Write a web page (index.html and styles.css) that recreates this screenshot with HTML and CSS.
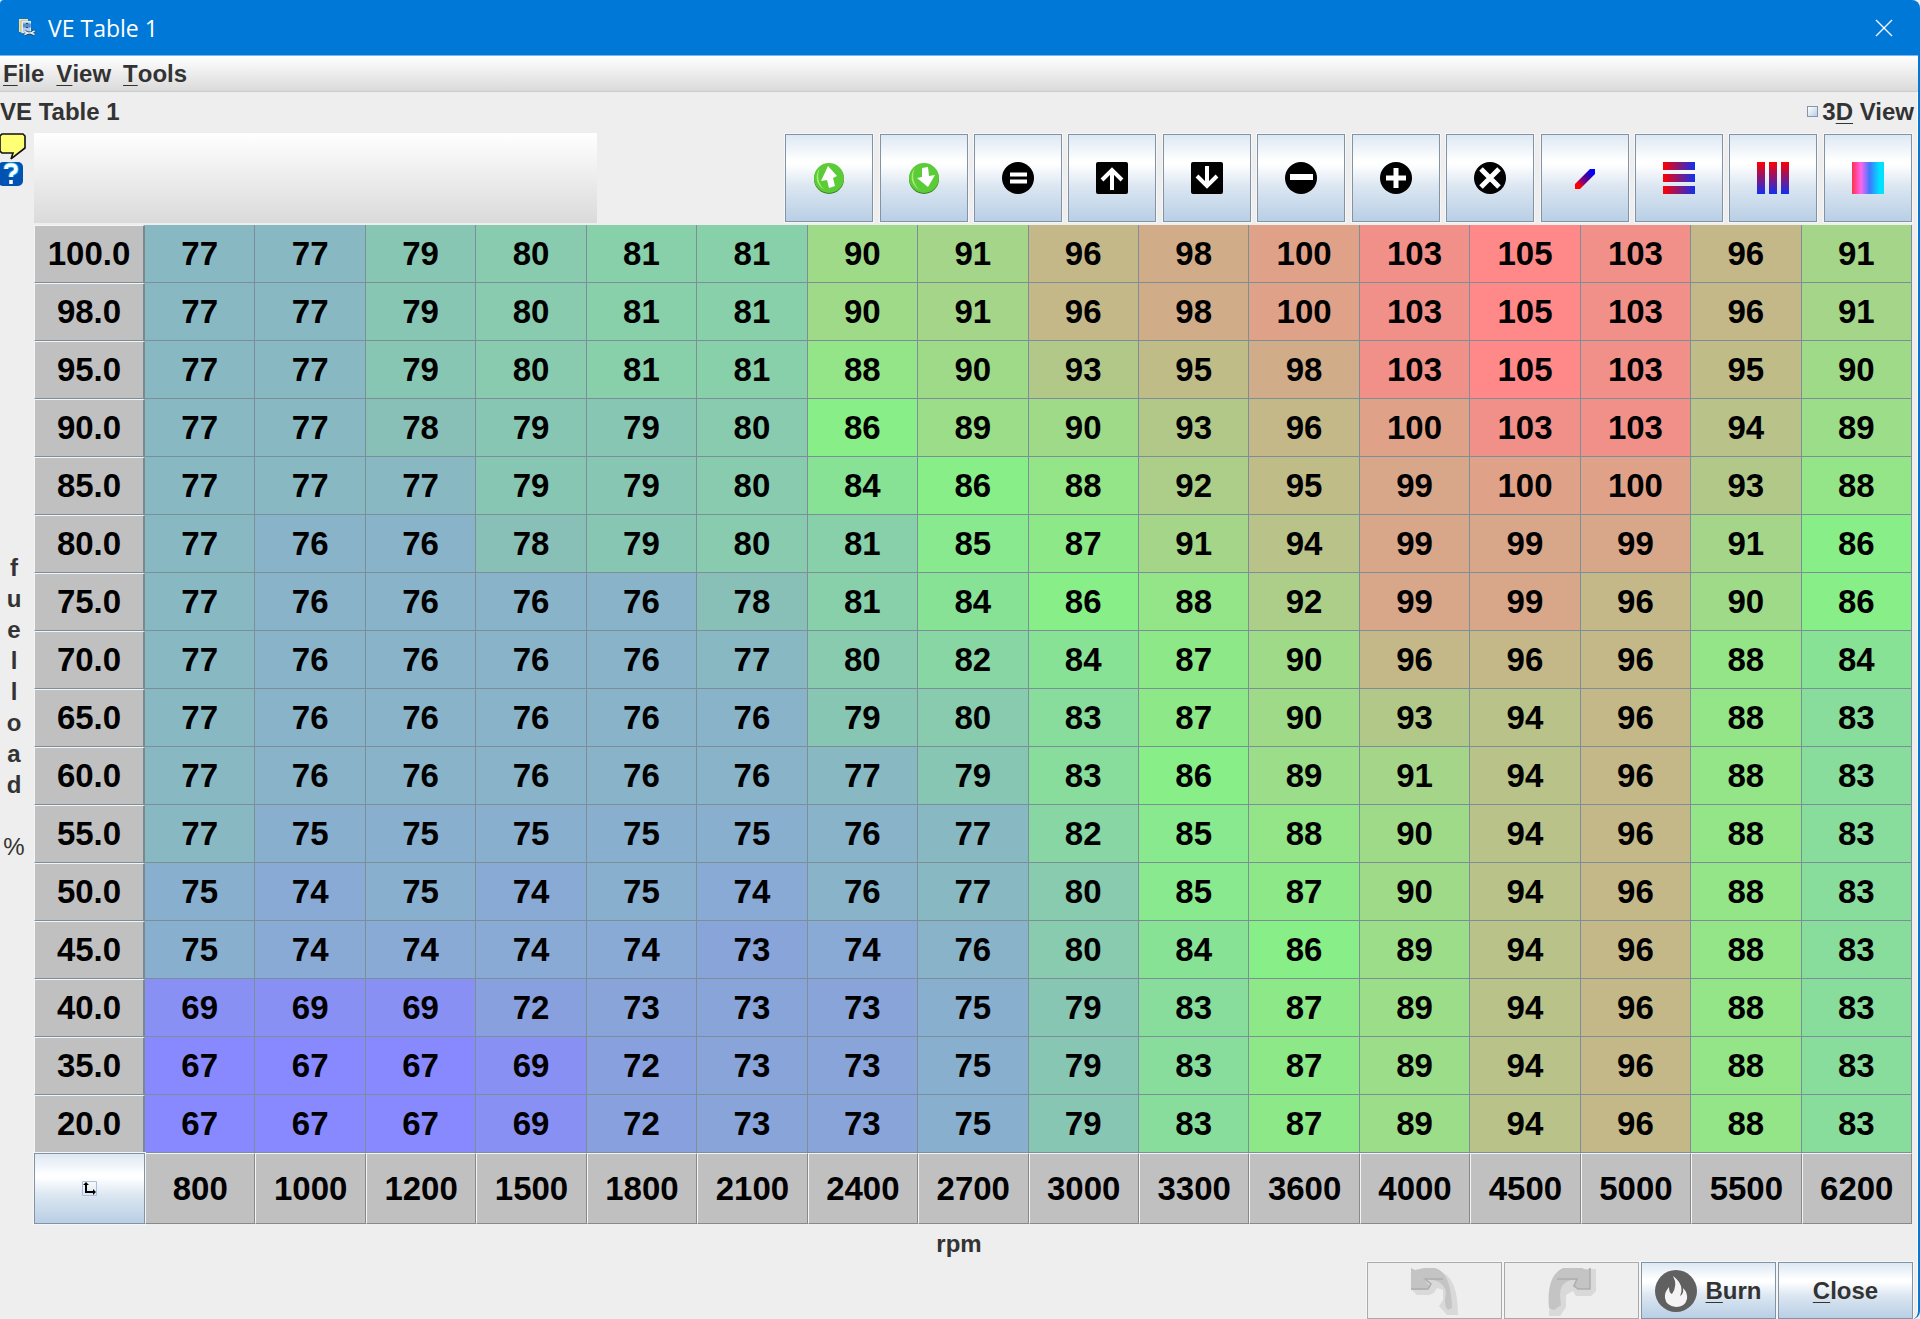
FILE: index.html
```
<!DOCTYPE html>
<html lang="en">
<head>
<meta charset="utf-8">
<title>VE Table 1</title>
<link rel="stylesheet" href="styles.css">
</head>
<body>
<div class="window">
<header class="titlebar">
<svg class="app-icon" viewBox="0 0 18 18" aria-hidden="true"><path d="M1 0h9v2H4v11H1z" fill="#f3df9a"/><path d="M3 2h9v2H6v10H3z" fill="#fff3c4" stroke="#8b8352" stroke-width=".5"/><rect x="4.500" y="2.500" width="8" height="11" fill="#a9cdf5" stroke="#dcecff"/><path d="M6 4.500v4M8 4.500h2v4H8zM12 4.500v4" stroke="#164a8c" fill="none"/><path d="M7 12.500l3 1.500h3l3-2M7 15.500l3-1.500M16 15.500l-3-1.500" stroke="#333" stroke-width="3" fill="none"/><path d="M6.500 12.500l3.500 1.500h3l3.500-2M6.500 15.500l3.500-1.500M16.500 15.500l-3.500-1.500" stroke="#eee" stroke-width="1.600" fill="none"/></svg>
<span class="title">VE Table 1</span>
<button class="close-x" aria-label="Close window"><svg viewBox="0 0 18 18" width="18" height="18"><path d="M1 1l16 16M17 1L1 17" stroke="#fff" stroke-width="1.300"/></svg></button>
</header>
<div class="frame">
<nav class="menubar"><button><u>F</u>ile</button><button><u>V</u>iew</button><button><u>T</u>ools</button></nav>
<div class="heading"><h1>VE Table 1</h1><label><input type="checkbox"><span>3<u>D</u> View</span></label></div>
<main class="editor">
<aside class="side">
<button aria-label="Notes"><svg width="27" height="27" viewBox="0 0 27 27"><path d="M2 1h21l2 2v12l-13 10-1 1 2-6H2l-2-2V3z" fill="#ffff73" stroke="#111" stroke-width="1.600"/></svg></button>
<button aria-label="Help"><svg width="24" height="25" viewBox="0 0 24 25"><rect x="-2" y="0" width="25" height="24" rx="5" fill="#0252b4"/><path d="M6 7q0-4 5-4t5 4q0 3-3 4-2 1-2 4" fill="none" stroke="#19b7ee" stroke-width="5.500"/><path d="M6 7q0-4 5-4t5 4q0 3-3 4-2 1-2 4M11 18v4" fill="none" stroke="#fff" stroke-width="3.600"/></svg></button>
<div class="axis-y"><b>f</b><b>u</b><b>e</b><b>l</b><b>l</b><b>o</b><b>a</b><b>d</b><b>&nbsp;</b><span>%</span></div>
</aside>
<section class="content">
<div class="toolbar">
<div class="strip"></div>
<div class="tools">
<button aria-label="Increase"><svg viewBox="0 0 32 32"><circle cx="16" cy="17" r="15" fill="#377d25"/><circle cx="16" cy="16" r="15" fill="#5ccb38"/><path d="M7 6a14 14 0 0 0 5 22A18 18 0 0 1 7 6" fill="#a5ef75"/><path d="M15 4l9 10-4 2 2 8-6 2-2-8-6 1z" fill="#fff"/></svg></button>
<button aria-label="Decrease"><svg viewBox="0 0 32 32"><circle cx="16" cy="17" r="15" fill="#377d25"/><circle cx="16" cy="16" r="15" fill="#5ccb38"/><path d="M7 6a14 14 0 0 0 5 22A18 18 0 0 1 7 6" fill="#a5ef75"/><path d="M14 6l6-1 1 9 6-1-7 12-11-9 5-1z" fill="#fff"/></svg></button>
<button aria-label="Set to"><svg viewBox="0 0 32 32"><circle cx="16" cy="16" r="16"/><path d="M8 12.500h17M8 19.500h17" stroke="#fff" stroke-width="4"/></svg></button>
<button aria-label="Step up"><svg viewBox="0 0 32 32"><rect width="32" height="32" rx="2"/><path d="M16 28V8M6 18L16 8l10 10" fill="none" stroke="#fff" stroke-width="4"/></svg></button>
<button aria-label="Step down"><svg viewBox="0 0 32 32"><rect width="32" height="32" rx="2"/><path d="M16 4v20M6 14l10 10 10-10" fill="none" stroke="#fff" stroke-width="4"/></svg></button>
<button aria-label="Subtract"><svg viewBox="0 0 32 32"><circle cx="16" cy="16" r="16"/><path d="M5 15h23" stroke="#fff" stroke-width="6"/></svg></button>
<button aria-label="Add"><svg viewBox="0 0 32 32"><circle cx="16" cy="16" r="16"/><path d="M6 16h20M16 6v20" stroke="#fff" stroke-width="5"/></svg></button>
<button aria-label="Multiply"><svg viewBox="0 0 32 32"><circle cx="16" cy="16" r="16"/><path d="M7 7l18 18M25 7L7 25" stroke="#fff" stroke-width="5"/></svg></button>
<button aria-label="Interpolate"><svg viewBox="0 0 32 32"><defs><linearGradient id="d" gradientUnits="userSpaceOnUse" x1="7" y1="26" x2="26" y2="7"><stop offset=".15" stop-color="#f00"/><stop offset=".35" stop-color="#800080"/><stop offset=".6" stop-color="#4000a0"/><stop offset=".85" stop-color="#00f"/></linearGradient></defs><path d="M6 22L21 7h5v5L11 27H6z" fill="url(#d)"/></svg></button>
<button aria-label="Interpolate horizontally"><svg viewBox="0 0 32 32"><defs><linearGradient id="h"><stop stop-color="#f00"/><stop offset="1" stop-color="#1030f0"/></linearGradient></defs><path d="M0 0h32v8H0zM0 12h32v8H0zM0 24h32v8H0z" fill="url(#h)"/></svg></button>
<button aria-label="Interpolate vertically"><svg viewBox="0 0 32 32"><defs><linearGradient id="v" x2="0" y2="1"><stop stop-color="#f00"/><stop offset="1" stop-color="#1030f0"/></linearGradient></defs><path d="M0 0h8v32H0zM12 0h8v32h-8zM24 0h8v32h-8z" fill="url(#v)"/></svg></button>
<button aria-label="Smooth"><svg viewBox="0 0 32 32"><defs><linearGradient id="s"><stop stop-color="#ff3048"/><stop offset=".28" stop-color="#ff66f0"/><stop offset=".55" stop-color="#3f78ff"/><stop offset=".85" stop-color="#00e0ff"/></linearGradient></defs><path d="M0 0h32v32H0z" fill="url(#s)"/></svg></button>
</div>
</div>
<table class="ve">
<colgroup><col class="load"><col span="16"></colgroup>
<tbody>
<tr><th scope="row">100.0<td class="v77">77<td class="v77">77<td class="v79">79<td class="v80">80<td class="v81">81<td class="v81">81<td class="v90">90<td class="v91">91<td class="v96">96<td class="v98">98<td class="v100">100<td class="v103">103<td class="v105">105<td class="v103">103<td class="v96">96<td class="v91">91
<tr><th scope="row">98.0<td class="v77">77<td class="v77">77<td class="v79">79<td class="v80">80<td class="v81">81<td class="v81">81<td class="v90">90<td class="v91">91<td class="v96">96<td class="v98">98<td class="v100">100<td class="v103">103<td class="v105">105<td class="v103">103<td class="v96">96<td class="v91">91
<tr><th scope="row">95.0<td class="v77">77<td class="v77">77<td class="v79">79<td class="v80">80<td class="v81">81<td class="v81">81<td class="v88">88<td class="v90">90<td class="v93">93<td class="v95">95<td class="v98">98<td class="v103">103<td class="v105">105<td class="v103">103<td class="v95">95<td class="v90">90
<tr><th scope="row">90.0<td class="v77">77<td class="v77">77<td class="v78">78<td class="v79">79<td class="v79">79<td class="v80">80<td class="v86">86<td class="v89">89<td class="v90">90<td class="v93">93<td class="v96">96<td class="v100">100<td class="v103">103<td class="v103">103<td class="v94">94<td class="v89">89
<tr><th scope="row">85.0<td class="v77">77<td class="v77">77<td class="v77">77<td class="v79">79<td class="v79">79<td class="v80">80<td class="v84">84<td class="v86">86<td class="v88">88<td class="v92">92<td class="v95">95<td class="v99">99<td class="v100">100<td class="v100">100<td class="v93">93<td class="v88">88
<tr><th scope="row">80.0<td class="v77">77<td class="v76">76<td class="v76">76<td class="v78">78<td class="v79">79<td class="v80">80<td class="v81">81<td class="v85">85<td class="v87">87<td class="v91">91<td class="v94">94<td class="v99">99<td class="v99">99<td class="v99">99<td class="v91">91<td class="v86">86
<tr><th scope="row">75.0<td class="v77">77<td class="v76">76<td class="v76">76<td class="v76">76<td class="v76">76<td class="v78">78<td class="v81">81<td class="v84">84<td class="v86">86<td class="v88">88<td class="v92">92<td class="v99">99<td class="v99">99<td class="v96">96<td class="v90">90<td class="v86">86
<tr><th scope="row">70.0<td class="v77">77<td class="v76">76<td class="v76">76<td class="v76">76<td class="v76">76<td class="v77">77<td class="v80">80<td class="v82">82<td class="v84">84<td class="v87">87<td class="v90">90<td class="v96">96<td class="v96">96<td class="v96">96<td class="v88">88<td class="v84">84
<tr><th scope="row">65.0<td class="v77">77<td class="v76">76<td class="v76">76<td class="v76">76<td class="v76">76<td class="v76">76<td class="v79">79<td class="v80">80<td class="v83">83<td class="v87">87<td class="v90">90<td class="v93">93<td class="v94">94<td class="v96">96<td class="v88">88<td class="v83">83
<tr><th scope="row">60.0<td class="v77">77<td class="v76">76<td class="v76">76<td class="v76">76<td class="v76">76<td class="v76">76<td class="v77">77<td class="v79">79<td class="v83">83<td class="v86">86<td class="v89">89<td class="v91">91<td class="v94">94<td class="v96">96<td class="v88">88<td class="v83">83
<tr><th scope="row">55.0<td class="v77">77<td class="v75">75<td class="v75">75<td class="v75">75<td class="v75">75<td class="v75">75<td class="v76">76<td class="v77">77<td class="v82">82<td class="v85">85<td class="v88">88<td class="v90">90<td class="v94">94<td class="v96">96<td class="v88">88<td class="v83">83
<tr><th scope="row">50.0<td class="v75">75<td class="v74">74<td class="v75">75<td class="v74">74<td class="v75">75<td class="v74">74<td class="v76">76<td class="v77">77<td class="v80">80<td class="v85">85<td class="v87">87<td class="v90">90<td class="v94">94<td class="v96">96<td class="v88">88<td class="v83">83
<tr><th scope="row">45.0<td class="v75">75<td class="v74">74<td class="v74">74<td class="v74">74<td class="v74">74<td class="v73">73<td class="v74">74<td class="v76">76<td class="v80">80<td class="v84">84<td class="v86">86<td class="v89">89<td class="v94">94<td class="v96">96<td class="v88">88<td class="v83">83
<tr><th scope="row">40.0<td class="v69">69<td class="v69">69<td class="v69">69<td class="v72">72<td class="v73">73<td class="v73">73<td class="v73">73<td class="v75">75<td class="v79">79<td class="v83">83<td class="v87">87<td class="v89">89<td class="v94">94<td class="v96">96<td class="v88">88<td class="v83">83
<tr><th scope="row">35.0<td class="v67">67<td class="v67">67<td class="v67">67<td class="v69">69<td class="v72">72<td class="v73">73<td class="v73">73<td class="v75">75<td class="v79">79<td class="v83">83<td class="v87">87<td class="v89">89<td class="v94">94<td class="v96">96<td class="v88">88<td class="v83">83
<tr><th scope="row">20.0<td class="v67">67<td class="v67">67<td class="v67">67<td class="v69">69<td class="v72">72<td class="v73">73<td class="v73">73<td class="v75">75<td class="v79">79<td class="v83">83<td class="v87">87<td class="v89">89<td class="v94">94<td class="v96">96<td class="v88">88<td class="v83">83
</tbody>
<tfoot><tr><td class="corner"><button aria-label="Swap axes"><svg width="15" height="15" viewBox="0 0 15 15"><path d="M.5.500h14v14H.5z" fill="none" stroke="#a9bfe0"/><path d="M4 3v8h8" fill="none" stroke="#000" stroke-width="2"/><path d="M1 4l3-3 3 3zM11 8l3 3-3 3z"/></svg></button><th scope="col">800<th scope="col">1000<th scope="col">1200<th scope="col">1500<th scope="col">1800<th scope="col">2100<th scope="col">2400<th scope="col">2700<th scope="col">3000<th scope="col">3300<th scope="col">3600<th scope="col">4000<th scope="col">4500<th scope="col">5000<th scope="col">5500<th scope="col">6200
</tfoot>
</table>
</section>
</main>
<div class="axis-x">rpm</div>
<footer class="actions">
<button disabled aria-label="Undo"><svg width="50" height="50" viewBox="0 0 50 50"><path d="M2 5h26q20 4 20 44H37l-8-9 4-6v-10l-6-2-3 5-5 2H7l-5-5z" fill="#d9d9d9"/><path d="M1 2l4 2 9-2h11q16 4 17 40l-4 2q-5-5-2-17-2-14-22-14l6 8-6 3H1z" fill="#c4c4c4"/><path d="M1 23h17l3-5-6-5h18" fill="none" stroke="#adadad" stroke-width="1.500"/></svg></button>
<button disabled aria-label="Redo"><svg width="50" height="50" viewBox="0 0 50 50"><path d="M3 30Q4 6 18 3h31v22l-5 5H29l-3-5-7 4v12l-6 9H2z" fill="#d9d9d9"/><path d="M2 42Q-1 10 16 2h19l5 2 3-2v21H31l-5-3 4-7Q13 14 13 29l1 10-7 5z" fill="#c4c4c4"/><path d="M10 13h20l-3 7 4 3h12V2" fill="none" stroke="#adadad" stroke-width="1.500"/></svg></button>
<button><svg width="42" height="42" viewBox="0 0 42 42"><circle cx="21" cy="21" r="21" fill="#606060"/><path d="M18 6q12 9 7 20 4-2 3-8 5 5 4 11-2 8-11 8-10-1-11-9-1-5 4-11 0 6 3 7 6-9 1-18" fill="#f4f4f4"/></svg><span><u>B</u>urn</span></button>
<button><span><u>C</u>lose</span></button>
</footer>
</div>
</div>
</body>
</html>
```
FILE: styles.css
```
* { box-sizing: border-box; }
body { margin: 0; background: #eee; color: #333; font: bold 24px/30px "Liberation Sans", Arial, sans-serif; }
button { font: inherit; color: inherit; padding: 0; margin: 0; border: 0; background: none; display: flex; align-items: center; justify-content: center; }
svg { display: block; overflow: visible; }
u { text-decoration-thickness: 1px; text-underline-offset: 3px; text-decoration-skip-ink: none; }

.window { min-height: 100vh; display: flex; flex-direction: column; }
.titlebar { display: flex; align-items: center; height: 55px; padding: 0 26px 0 18px; background: #0078d7; color: #fff; border-radius: 4px 8px 0 0; }
.app-icon { width: 18px; height: 18px; margin-right: 12px; }
.title { flex: 1; font: 400 23px/30px "Open Sans", "Noto Sans", sans-serif; }
.close-x { width: 20px; height: 20px; }
.frame { flex: 1; display: flex; flex-direction: column; border-right: 2px solid #0078d7; border-radius: 0 0 8px 0; box-shadow: inset -1px 0 #fff; }

.menubar { display: flex; gap: 12px; height: 37px; padding: 1px 3px 0; border-top: 1px solid #79b8ee; border-bottom: 1px solid #ccc; background: linear-gradient(#fff, #dadada); }
.heading { display: flex; justify-content: space-between; align-items: center; height: 41px; padding: 0 4px 2px 0; }
.heading h1 { margin: 0; font-size: 24px; line-height: 30px; }
.heading label { display: flex; align-items: center; gap: 4px; }
.heading input { appearance: none; width: 11px; height: 11px; margin: 0; border: 1px solid #8496aa; background: linear-gradient(135deg, #fff, #b8cfe5); }

.editor { display: flex; padding-right: 6px; }
.side { flex: none; width: 34px; display: flex; flex-direction: column; align-items: flex-start; gap: 1px; }
.side button { height: 27px; }
.axis-y { flex: 1; width: 28px; display: flex; flex-direction: column; justify-content: center; text-align: center; line-height: 31px; }
.axis-y span { font-weight: 400; }

.content { flex: 1; min-width: 0; }
.toolbar { display: flex; justify-content: space-between; height: 92px; }
.strip { width: 30%; height: 90px; background: linear-gradient(#fff, #dadada); }
.tools { width: 60%; display: flex; justify-content: space-between; padding-top: 1px; }
.tools button { width: 88px; height: 88px; }
.tools svg { width: 32px; height: 32px; }
.tools button, .corner button, .actions button { border: 1px solid #8293a5; background: linear-gradient(#dde8f3, #fff 30%, #fff 34%, #dbe6f1 60%, #b8cfe5); box-shadow: 0 0 0 1px #f6f6f6; }

.ve { width: 100%; table-layout: fixed; border-spacing: 0; color: #000; font-size: 33px; line-height: 36px; text-align: center; }
.load { width: 111px; }
.ve td, .ve th { padding: 0; height: 58px; border-right: 1px solid #7c8f98; border-bottom: 1px solid #7c8f98; }
.ve th { background: #c0c0c0; border-left: 1px solid #f4f4f4; border-top: 1px solid #f4f4f4; border-right-color: #888; }
.ve tbody th { border-right: 2px solid #7c8890; }
.ve tfoot th, .ve tfoot td { height: 71px; border-bottom-color: #888; }
.ve .corner { border: 0; }
.corner button { width: 100%; height: 71px; }

.v67 { background: #8888ff; }
.v69 { background: #8890f4; }
.v72 { background: #88a0de; }
.v73 { background: #88a4d9; }
.v74 { background: #88aad4; }
.v75 { background: #88afcd; }
.v76 { background: #88b3c9; }
.v77 { background: #88b9c2; }
.v78 { background: #88c0b8; }
.v79 { background: #88c6b4; }
.v80 { background: #88cbae; }
.v81 { background: #88d0aa; }
.v82 { background: #88d6a4; }
.v83 { background: #88dc9c; }
.v84 { background: #88e296; }
.v85 { background: #88e98e; }
.v86 { background: #88ee88; }
.v87 { background: #8de888; }
.v88 { background: #94e488; }
.v89 { background: #9bdd88; }
.v90 { background: #9fda88; }
.v91 { background: #a4d588; }
.v92 { background: #acce88; }
.v93 { background: #b2c888; }
.v94 { background: #b9c288; }
.v95 { background: #bfbc88; }
.v96 { background: #c4b788; }
.v98 { background: #d0ac88; }
.v99 { background: #d8a688; }
.v100 { background: #dfa288; }
.v103 { background: #f09088; }
.v105 { background: #ff8888; }

.axis-x { padding: 5px 0 3px; text-align: center; }
.actions { display: flex; justify-content: flex-end; gap: 2px; margin-top: auto; padding-right: 5px; }
.actions button { width: 135px; height: 57px; gap: 8px; }
.actions button:disabled { background: #eee; border-color: #aaa; }
```
